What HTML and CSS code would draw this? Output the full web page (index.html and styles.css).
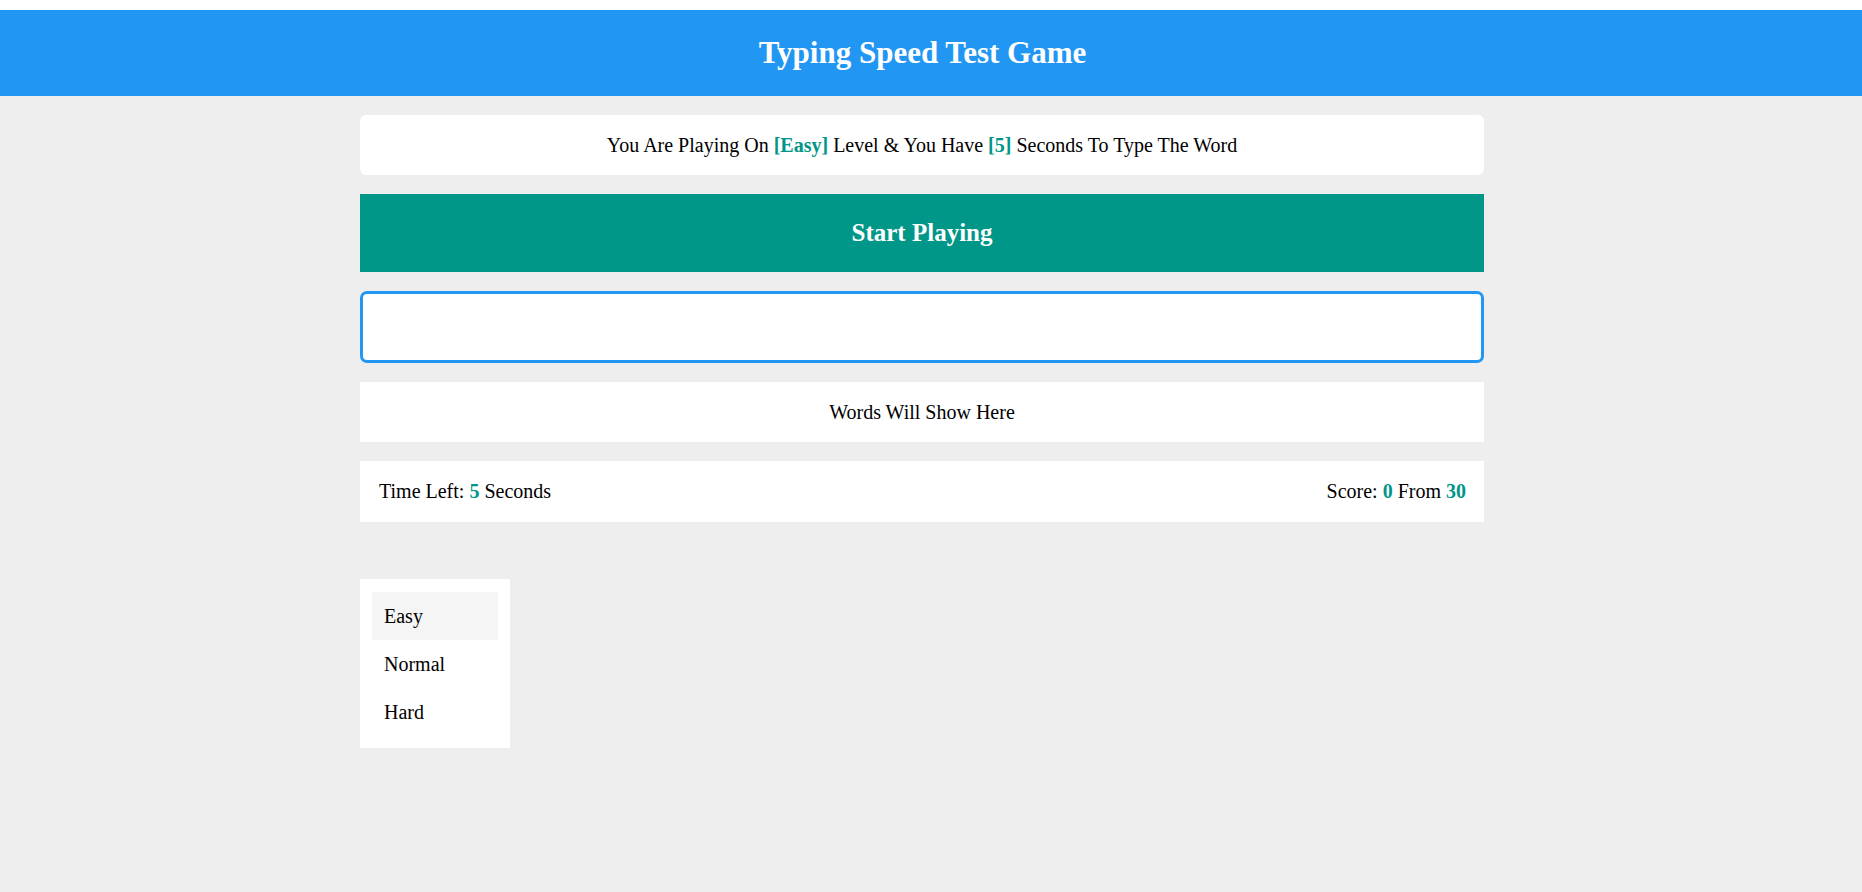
FILE: index.html
```html
<!DOCTYPE html>
<html lang="en">
<head>
<meta charset="utf-8">
<title>Typing Speed Test Game</title>
<link rel="stylesheet" href="styles.css">
</head>
<body>
<div class="page">
  <header class="header">
    <h1 class="title">Typing Speed Test Game</h1>
  </header>
  <main class="main">
    <div class="game">
      <div class="message">You Are Playing On <span class="hl">[Easy]</span> Level &amp; You Have <span class="hl">[5]</span> Seconds To Type The Word</div>
      <div class="start">Start Playing</div>
      <input class="input" type="text">
      <div class="words">Words Will Show Here</div>
      <div class="control">
        <span class="time">Time Left: <span class="hl">5</span> Seconds</span>
        <span class="score">Score: <span class="hl">0</span> From <span class="hl">30</span></span>
      </div>
      <div class="levels">
        <div class="level active">Easy</div>
        <div class="level">Normal</div>
        <div class="level">Hard</div>
      </div>
    </div>
  </main>
</div>
</body>
</html>
```
FILE: styles.css
```css
* { box-sizing: border-box; }
html, body {
  margin: 0;
  background: #fff;
}
body {
  padding-top: 10px;
  font-family: "Liberation Serif", "Times New Roman", serif;
  font-size: 20px;
  color: #000;
}
.page {
  background: #eeeeee;
  min-height: calc(100vh - 10px);
}
.header {
  background: #2196f3;
  height: 86px;
  padding-right: 17px;
  text-align: center;
  line-height: 86px;
}
.title {
  margin: 0;
  color: #fff;
  font-size: 31px;
  font-weight: bold;
  line-height: 86px;
}
.main {
  padding: 19px 18px 0 0;
}
.game {
  width: 1124px;
  margin: 0 auto;
  display: flex;
  flex-direction: column;
  gap: 19px;
}
.message {
  background: #fff;
  border-radius: 6px;
  height: 60px;
  line-height: 60px;
  text-align: center;
}
.hl {
  color: #009688;
  font-weight: bold;
}
.start {
  background: #009688;
  color: #fff;
  font-weight: bold;
  font-size: 25px;
  height: 78px;
  line-height: 78px;
  text-align: center;
}
.input {
  display: block;
  width: 100%;
  height: 72px;
  border: 3px solid #2196f3;
  border-radius: 7px;
  background: #fff;
  outline: none;
  font-family: inherit;
  font-size: 20px;
  padding: 0 16px;
}
.words {
  background: #fff;
  height: 60px;
  line-height: 60px;
  text-align: center;
}
.control {
  background: #fff;
  height: 61px;
  display: flex;
  align-items: center;
  justify-content: space-between;
  padding: 0 18px 0 19px;
}
.levels {
  margin-top: 38px;
  width: 150px;
  background: #fff;
  padding: 13px 12px 12px;
  display: flex;
  flex-direction: column;
}
.level {
  height: 48px;
  padding: 0 12px;
  display: flex;
  align-items: center;
}
.level.active {
  background: #f5f5f5;
}
```
